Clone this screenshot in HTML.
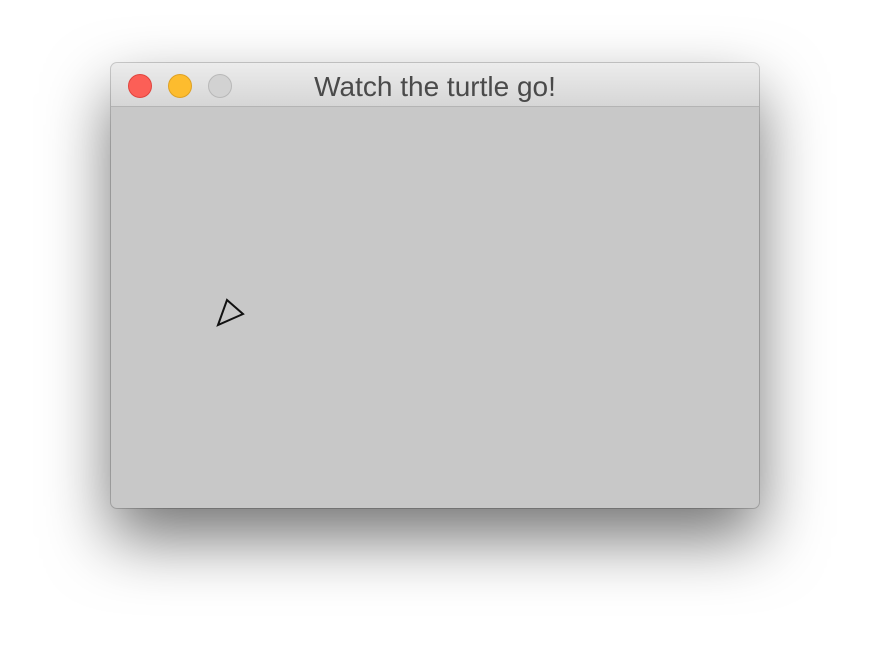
<!DOCTYPE html>
<html><head><meta charset="utf-8"><style>
html,body{margin:0;padding:0;width:870px;height:668px;background:#fff;overflow:hidden}
.win{position:absolute;left:111px;top:63px;width:648px;height:445px;border-radius:6px;background:#c8c8c8;
box-shadow:0 30px 65px rgba(0,0,0,0.55),0 0 0 1px rgba(0,0,0,0.18);overflow:hidden}
.tb{position:absolute;left:0;top:0;width:648px;height:43px;background:linear-gradient(#ececec,#d6d6d6);border-bottom:1px solid #b4b4b4}
.b{position:absolute;top:11px;width:24px;height:24px;border-radius:50%;box-sizing:border-box}
.t{position:absolute;left:0;width:648px;top:7px;text-align:center;font:28px "Liberation Sans",sans-serif;color:#4a4a4a;line-height:34px}
</style></head><body>
<div class="win">
<div class="tb">
<div class="b" style="left:17px;background:#fc5f57;border:1px solid #e0443e"></div>
<div class="b" style="left:57px;background:#fdbc2e;border:1px solid #dea123"></div>
<div class="b" style="left:97px;background:#d2d2d2;border:1px solid #b8b8b8"></div>
<div class="t">Watch the turtle go!</div>
</div>
</div>
<svg style="position:absolute;left:0;top:0" width="870" height="668"><polygon points="227,300 243,314 218,325" fill="none" stroke="#111" stroke-width="2"/></svg>
</body></html>
